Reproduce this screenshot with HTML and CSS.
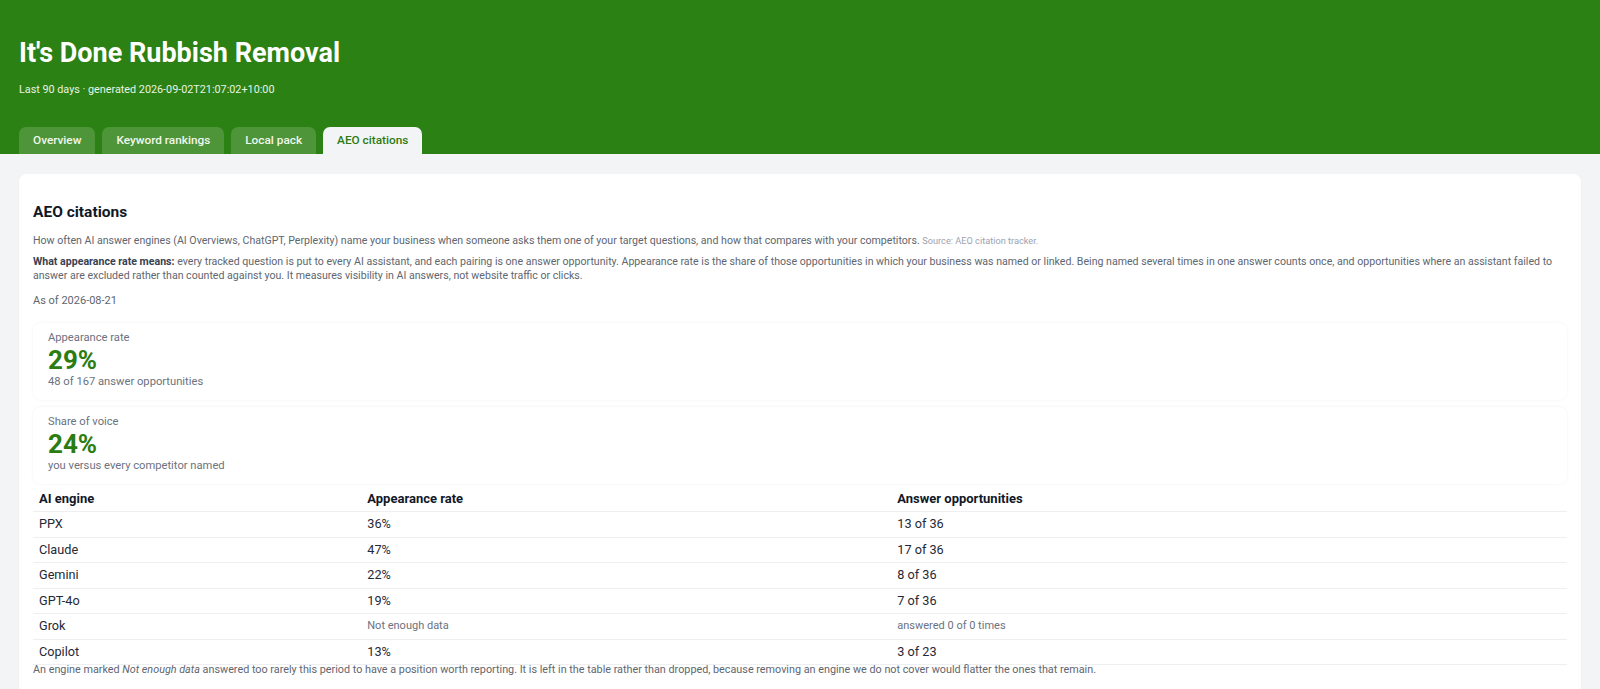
FILE: index.html
```html
<!DOCTYPE html>
<html lang="en">
<head>
    <meta charset="UTF-8">
    <meta name="viewport" content="width=device-width, initial-scale=1.0">
    <title>It's Done Rubbish Removal - AEO citations</title>
    <link rel="stylesheet" href="styles.css">
</head>
<body>
    <header class="top">
        <h1>It's Done Rubbish Removal</h1>
        <p class="meta">Last 90 days · generated 2026-09-02T21:07:02+10:00</p>
        <nav class="tabs">
            <a class="tab" href="#overview">Overview</a>
            <a class="tab" href="#keywords">Keyword rankings</a>
            <a class="tab" href="#local">Local pack</a>
            <a class="tab active" href="#aeo">AEO citations</a>
        </nav>
    </header>

    <main class="page">
        <section class="card" id="aeo">
            <h2>AEO citations</h2>
            <p class="lead">How often AI answer engines (AI Overviews, ChatGPT, Perplexity) name your business when someone asks them one of your target questions, and how that compares with your competitors. <span class="source">Source: AEO citation tracker.</span></p>
            <p class="lead explain"><strong>What appearance rate means:</strong> every tracked question is put to every AI assistant, and each pairing is one answer opportunity. Appearance rate is the share of those opportunities in which your business was named or linked. Being named several times in one answer counts once, and opportunities where an assistant failed to answer are excluded rather than counted against you. It measures visibility in AI answers, not website traffic or clicks.</p>
            <p class="asof">As of 2026-08-21</p>

            <div class="stats">
                <div class="stat">
                    <div class="stat-label">Appearance rate</div>
                    <div class="stat-value">29%</div>
                    <div class="stat-sub">48 of 167 answer opportunities</div>
                </div>
                <div class="stat">
                    <div class="stat-label">Share of voice</div>
                    <div class="stat-value">24%</div>
                    <div class="stat-sub">you versus every competitor named</div>
                </div>
            </div>

            <table class="engines">
                <thead>
                    <tr>
                        <th class="col-engine">AI engine</th>
                        <th class="col-rate">Appearance rate</th>
                        <th>Answer opportunities</th>
                    </tr>
                </thead>
                <tbody>
                    <tr><td>PPX</td><td>36%</td><td>13 of 36</td></tr>
                    <tr><td>Claude</td><td>47%</td><td>17 of 36</td></tr>
                    <tr><td>Gemini</td><td>22%</td><td>8 of 36</td></tr>
                    <tr><td>GPT-4o</td><td>19%</td><td>7 of 36</td></tr>
                    <tr><td>Grok</td><td class="muted">Not enough data</td><td class="muted">answered 0 of 0 times</td></tr>
                    <tr><td>Copilot</td><td>13%</td><td>3 of 23</td></tr>
                </tbody>
            </table>
            <p class="note">An engine marked <em>Not enough data</em> answered too rarely this period to have a position worth reporting. It is left in the table rather than dropped, because removing an engine we do not cover would flatter the ones that remain.</p>
        </section>
    </main>
</body>
</html>
```

FILE: styles.css
```css
* {
    margin: 0;
    padding: 0;
    box-sizing: border-box;
}
body {
    background-color: #f3f4f6;
    font-family: Roboto, "Noto Sans", "DejaVu Sans", sans-serif;
    color: #1f2937;
}

/* green banner with report title and section tabs */
.top {
    background-color: #2b8113;
    color: #fff;
    padding: 37px 19px 0;
}
.top h1 {
    font-size: 27px;
    line-height: 32px;
    font-weight: 700;
}
.meta {
    margin-top: 14px;
    font-size: 10.8px;
    line-height: 14px;
    color: #e9f3e4;
}
.tabs {
    display: flex;
    gap: 7px;
    margin-top: 30px;
}
.tab {
    display: block;
    height: 27px;
    line-height: 27px;
    padding: 0 14px;
    border-radius: 7px 7px 0 0;
    background-color: rgba(255, 255, 255, 0.16);
    color: #f1f7ee;
    font-size: 11.8px;
    font-weight: 500;
    text-decoration: none;
}
.tab.active {
    background-color: #f3f4f6;
    color: #2b7a12;
}

.page {
    padding: 20px 19px;
}
.card {
    background-color: #fff;
    border-radius: 8px;
    padding: 14px 14px 20px;
    box-shadow: 0 1px 2px rgba(0, 0, 0, 0.04);
}
.card h2 {
    margin-top: 14px;
    font-size: 15.5px;
    line-height: 20px;
    font-weight: 700;
    color: #111827;
}
.lead {
    margin-top: 12px;
    font-size: 10.6px;
    line-height: 14px;
    color: #60666f;
}
.lead.explain {
    margin-top: 7px;
}
.lead strong {
    color: #374151;
    font-weight: 700;
}
.source {
    font-size: 9.2px;
    color: #9ca3af;
}
.asof {
    margin-top: 11px;
    font-size: 11px;
    line-height: 14px;
    color: #60666f;
}

/* headline numbers */
.stats {
    display: flex;
    flex-direction: column;
    gap: 7px;
    margin-top: 15px;
}
.stat {
    padding: 7px 15px 10px;
    border-radius: 8px;
    background-color: #fff;
    box-shadow: 0 0 3px rgba(0, 0, 0, 0.06);
}
.stat-label {
    font-size: 11.2px;
    line-height: 16px;
    color: #6b7280;
}
.stat-value {
    font-size: 26px;
    line-height: 28px;
    font-weight: 700;
    color: #2b7d12;
}
.stat-sub {
    font-size: 11.2px;
    line-height: 16px;
    color: #6b7280;
}

/* per engine breakdown */
.engines {
    width: 100%;
    margin-top: 3px;
    border-collapse: collapse;
    text-align: left;
}
.engines th {
    padding: 4px 6px;
    font-size: 13px;
    line-height: 16px;
    font-weight: 700;
    color: #111827;
    border-bottom: 1px solid #eeeff1;
}
.engines td {
    padding: 4px 6px;
    font-size: 12.7px;
    line-height: 16.5px;
    color: #1f2937;
    border-bottom: 1px solid #eeeff1;
}
.col-engine {
    width: 21.4%;
}
.col-rate {
    width: 34.55%;
}
.engines td.muted {
    font-size: 11px;
    color: #6b7280;
}
.note {
    margin-top: -2px;
    font-size: 10.8px;
    line-height: 13px;
    color: #60666f;
}
```
